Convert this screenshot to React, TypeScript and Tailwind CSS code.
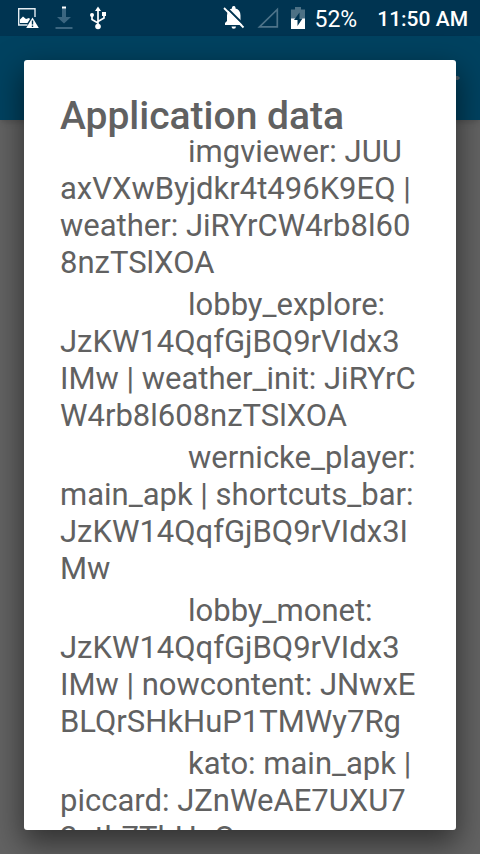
const entries = [
  "imgviewer: JUU\naxVXwByjdkr4t496K9EQ |\nweather: JiRYrCW4rb8l60\n8nzTSlXOA",
  "lobby_explore:\nJzKW14QqfGjBQ9rVIdx3\nIMw | weather_init: JiRYrC\nW4rb8l608nzTSlXOA",
  "wernicke_player:\nmain_apk | shortcuts_bar:\nJzKW14QqfGjBQ9rVIdx3I\nMw",
  "lobby_monet:\nJzKW14QqfGjBQ9rVIdx3\nIMw | nowcontent: JNwxE\nBLQrSHkHuP1TMWy7Rg",
  "kato: main_apk |\npiccard: JZnWeAE7UXU7\n2ath7TbHuQ",
];

function ImageWarningIcon() {
  return (
    <svg width="22" height="22" viewBox="0 0 22 22" fill="none">
      <path d="M10.500 18H1.700V1.700H18V10" stroke="#e4edf2" strokeWidth="1.400" />
      <path d="M3 16V12.500L6 9.500L9 12L12 11L13 12L10.500 16Z" fill="white" />
      <path d="M15.500 10.500L21.800 21H9.200Z" fill="white" />
      <path d="M15.500 13.500V17.500M15.500 18.500V20" stroke="#003451" strokeWidth="1.400" />
    </svg>
  );
}

function DownloadIcon() {
  return (
    <svg width="18" height="24" viewBox="0 0 18 24">
      <path d="M7 2H11V11H16L9 17.500L2 11H7Z" fill="#3b6680" />
      <path d="M7 0.500H11V2.500H7Z" fill="white" />
      <path d="M0.500 21H17.500V23H0.500Z" fill="#3b6680" />
    </svg>
  );
}

function UsbIcon() {
  return (
    <svg width="18" height="24" viewBox="0 0 18 24" fill="none">
      <path d="M9 20V3M9 17L3 13.500V9M9 15.500L15 12V8" stroke="white" strokeWidth="1.700" />
      <path d="M9 0.500L12 5H6Z" fill="white" />
      <circle cx="9" cy="20.500" r="2.800" fill="white" />
      <circle cx="3" cy="9" r="2" fill="white" />
      <path d="M13 6H17V10H13Z" fill="white" />
    </svg>
  );
}

function BellOffIcon() {
  return (
    <svg width="22" height="24" viewBox="0 0 22 24">
      <path d="M2 19V17L4 15V9.500C4 5.500 6 3.300 9 2.500V1.500A1.800 1.800 0 0 1 12.500 1.500V2.500C15.500 3.300 17.500 5.500 17.500 9.500V15L19.500 17V19Z" fill="white" />
      <path d="M8.500 20.500H13A2.200 2.200 0 0 1 8.500 20.500Z" fill="white" />
      <path d="M2.500 0.500L22 20" stroke="#003451" strokeWidth="2" />
      <path d="M1 2L20.500 21.500" stroke="white" strokeWidth="1.800" />
    </svg>
  );
}

function SignalIcon() {
  return (
    <svg width="22" height="22" viewBox="0 0 22 22" fill="none">
      <path d="M2.500 19.800H20.300V2.500Z" stroke="#4d7389" strokeWidth="1.700" />
    </svg>
  );
}

function BatteryIcon() {
  return (
    <svg width="14" height="22" viewBox="0 0 14 22">
      <path d="M0 2.500H4V0H10V2.500H14V12H0Z" fill="#4d7185" />
      <path d="M0 11.500H14V22H0Z" fill="white" />
      <path d="M8.500 5.500L3 13H6.500V19L11.500 11.500H8.500Z" fill="#003451" />
    </svg>
  );
}

function StatusBar() {
  return (
    <div className="flex h-9 shrink-0 items-center justify-between bg-[#003451] pr-3 pl-[17px] text-white">
      <div className="flex items-center gap-4">
        <ImageWarningIcon />
        <DownloadIcon />
        <UsbIcon />
      </div>
      <div className="flex items-center">
        <div className="flex items-center gap-3">
          <BellOffIcon />
          <SignalIcon />
          <BatteryIcon />
        </div>
        <span className="pt-1 pl-2.5 text-[23px] leading-8">52%</span>
        <span className="pt-0.5 pl-5 text-[21px] leading-8 font-medium">11:50 AM</span>
      </div>
    </div>
  );
}

export default function App() {
  return (
    <div className="relative flex h-screen flex-col overflow-hidden bg-[#636363] font-[Roboto,sans-serif]">
      <StatusBar />
      <header className="flex h-[84px] shrink-0 items-center justify-end bg-[#004260] pr-5 shadow-md">
        <svg width="20" height="4" viewBox="0 0 20 4">
          <path d="M0 0H18L20 2L18 4H0Z" fill="#50606a" />
        </svg>
      </header>

      <div className="absolute inset-0 flex px-6 pt-[60px] pb-6">
        <section
          role="dialog"
          aria-labelledby="dialog-title"
          className="w-full overflow-hidden rounded-[3px] bg-white px-9 pt-[39px] text-[#616161] shadow-[0_12px_30px_2px_rgba(0,0,0,0.5)]"
        >
          <h1 id="dialog-title" className="text-[39px] leading-[34px] font-medium">
            Application data
          </h1>
          <div className="flex flex-col gap-[5px] text-[31px] leading-[37px]">
            {entries.map((entry) => (
              <p key={entry} className="indent-32 whitespace-pre-line">
                {entry}
              </p>
            ))}
          </div>
        </section>
      </div>
    </div>
  );
}
